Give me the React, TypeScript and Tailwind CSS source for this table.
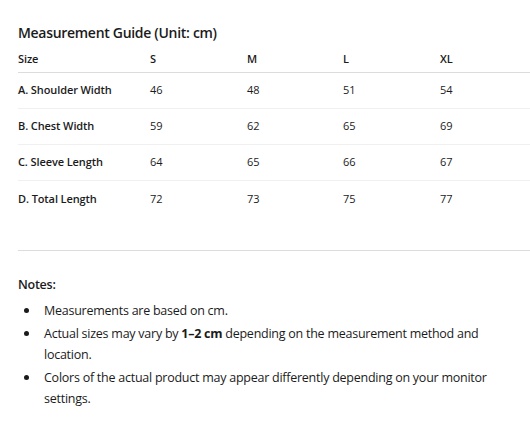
const sizes = ["S", "M", "L", "XL"];

const rows = [
  { label: "A. Shoulder Width", values: [46, 48, 51, 54] },
  { label: "B. Chest Width", values: [59, 62, 65, 69] },
  { label: "C. Sleeve Length", values: [64, 65, 66, 67] },
  { label: "D. Total Length", values: [72, 73, 75, 77] },
];

function Note({ children }: { children: React.ReactNode }) {
  return (
    <li className="flex mb-[2px]">
      <span className="shrink-0 w-[26px] h-[21px] flex items-center pl-[6px]">
        <span className="w-[5px] h-[5px] rounded-full bg-[#1b1b1b]" />
      </span>
      <span>{children}</span>
    </li>
  );
}

export default function App() {
  return (
    <div className="w-[530px] h-[433px] overflow-hidden bg-white text-[#1b1b1b] pl-[18px] pt-[23px] font-['Open_Sans',sans-serif]">
      <h2 className="text-[14px] font-semibold leading-[20px] tracking-[-0.3px]">Measurement Guide (Unit: cm)</h2>

      <table className="w-[520px] table-fixed mt-[3px] text-[11px] tracking-[-0.1px]">
        <colgroup>
          <col className="w-[132px]" />
          <col className="w-[97px]" />
          <col className="w-[96px]" />
          <col className="w-[97px]" />
          <col className="w-[98px]" />
        </colgroup>
        <thead>
          <tr className="border-b border-[#dcdcdc]">
            <th className="text-left font-semibold h-[26px]">Size</th>
            {sizes.map((s) => (
              <th key={s} className="text-left font-semibold">{s}</th>
            ))}
          </tr>
        </thead>
        <tbody>
          {rows.map((r, i) => (
            <tr key={r.label} className={i < rows.length - 1 ? "border-b border-[#f0f0f0]" : ""}>
              <td className="font-semibold h-[36.3px]">{r.label}</td>
              {r.values.map((v, j) => (
                <td key={j}>{v}</td>
              ))}
            </tr>
          ))}
        </tbody>
      </table>

      <div className="w-[520px] h-px bg-[#dcdcdc] mt-[33px]" />

      <div className="mt-[25px] w-[497px] text-[12.5px] tracking-[-0.25px]">
        <p className="font-semibold leading-[18px]">Notes:</p>
        <ul className="mt-[6px] leading-[21px]">
          <Note>Measurements are based on cm.</Note>
          <Note>
            Actual sizes may vary by <b className="font-bold">1–2 cm</b> depending on the measurement method and location.
          </Note>
          <Note>Colors of the actual product may appear differently depending on your monitor settings.</Note>
        </ul>
      </div>
    </div>
  );
}
